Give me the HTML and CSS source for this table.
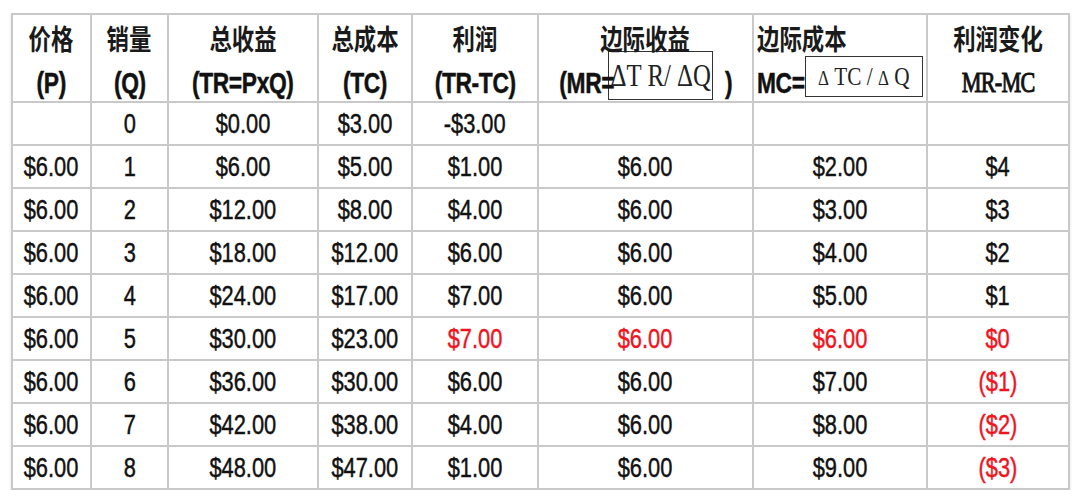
FILE: index.html
```html
<!DOCTYPE html>
<html lang="zh">
<head>
<meta charset="utf-8">
<title>利润表</title>
<link rel="stylesheet" href="styles.css">
</head>
<body>
<table class="grid">
  <colgroup>
    <col class="c1"><col class="c2"><col class="c3"><col class="c4"><col class="c5"><col class="c6"><col class="c7"><col class="c8">
  </colgroup>
  <thead>
    <tr class="head">
      <th><div class="h"><span class="cn">价格</span><span class="lat">(P)</span></div></th>
      <th><div class="h"><span class="cn">销量</span><span class="lat">(Q)</span></div></th>
      <th><div class="h"><span class="cn">总收益</span><span class="lat">(TR=PxQ)</span></div></th>
      <th><div class="h"><span class="cn">总成本</span><span class="lat">(TC)</span></div></th>
      <th><div class="h"><span class="cn">利润</span><span class="lat">(TR-TC)</span></div></th>
      <th><div class="h"><span class="cn">边际收益</span>
        <div class="eqline mr"><span class="lat open">(MR=</span><span class="eq eq-mr"><span class="eqt">ΔT R/ ΔQ</span></span><span class="lat close">)</span></div></div></th>
      <th><div class="h left"><span class="cn">边际成本</span>
        <div class="eqline mc"><span class="lat">MC=</span><span class="eq eq-mc"><span class="eqt small"><span class="d">Δ</span> TC / <span class="d">Δ</span> Q</span></span></div></div></th>
      <th><div class="h"><span class="cn">利润变化</span><span class="serif">MR-MC</span></div></th>
    </tr>
  </thead>
  <tbody>
    <tr><td></td><td><span class="n">0</span></td><td><span class="n">$0.00</span></td><td><span class="n">$3.00</span></td><td><span class="n">-$3.00</span></td><td></td><td></td><td></td></tr>
    <tr><td><span class="n">$6.00</span></td><td><span class="n">1</span></td><td><span class="n">$6.00</span></td><td><span class="n">$5.00</span></td><td><span class="n">$1.00</span></td><td><span class="n">$6.00</span></td><td><span class="n">$2.00</span></td><td><span class="n">$4</span></td></tr>
    <tr><td><span class="n">$6.00</span></td><td><span class="n">2</span></td><td><span class="n">$12.00</span></td><td><span class="n">$8.00</span></td><td><span class="n">$4.00</span></td><td><span class="n">$6.00</span></td><td><span class="n">$3.00</span></td><td><span class="n">$3</span></td></tr>
    <tr><td><span class="n">$6.00</span></td><td><span class="n">3</span></td><td><span class="n">$18.00</span></td><td><span class="n">$12.00</span></td><td><span class="n">$6.00</span></td><td><span class="n">$6.00</span></td><td><span class="n">$4.00</span></td><td><span class="n">$2</span></td></tr>
    <tr><td><span class="n">$6.00</span></td><td><span class="n">4</span></td><td><span class="n">$24.00</span></td><td><span class="n">$17.00</span></td><td><span class="n">$7.00</span></td><td><span class="n">$6.00</span></td><td><span class="n">$5.00</span></td><td><span class="n">$1</span></td></tr>
    <tr><td><span class="n">$6.00</span></td><td><span class="n">5</span></td><td><span class="n">$30.00</span></td><td><span class="n">$23.00</span></td><td class="red"><span class="n">$7.00</span></td><td class="red"><span class="n">$6.00</span></td><td class="red"><span class="n">$6.00</span></td><td class="red"><span class="n">$0</span></td></tr>
    <tr><td><span class="n">$6.00</span></td><td><span class="n">6</span></td><td><span class="n">$36.00</span></td><td><span class="n">$30.00</span></td><td><span class="n">$6.00</span></td><td><span class="n">$6.00</span></td><td><span class="n">$7.00</span></td><td class="red"><span class="n">($1)</span></td></tr>
    <tr><td><span class="n">$6.00</span></td><td><span class="n">7</span></td><td><span class="n">$42.00</span></td><td><span class="n">$38.00</span></td><td><span class="n">$4.00</span></td><td><span class="n">$6.00</span></td><td><span class="n">$8.00</span></td><td class="red"><span class="n">($2)</span></td></tr>
    <tr><td><span class="n">$6.00</span></td><td><span class="n">8</span></td><td><span class="n">$48.00</span></td><td><span class="n">$47.00</span></td><td><span class="n">$1.00</span></td><td><span class="n">$6.00</span></td><td><span class="n">$9.00</span></td><td class="red"><span class="n">($3)</span></td></tr>
  </tbody>
</table>
</body>
</html>
```
FILE: styles.css
```css
html, body {
  margin: 0;
  padding: 0;
  background: #fff;
}
body {
  padding: 13px 0 0 11px;
  font-family: "Liberation Sans", Arial, sans-serif;
  color: #111;
}
.grid {
  border-collapse: collapse;
  table-layout: fixed;
  width: 1057px;
  box-shadow: 0 2px 3px rgba(0,0,0,0.12);
}
.c1 { width: 79px; }
.c2 { width: 77px; }
.c3 { width: 150px; }
.c4 { width: 94px; }
.c5 { width: 126px; }
.c6 { width: 215px; }
.c7 { width: 174px; }
.c8 { width: 142px; }
.grid th, .grid td {
  border: 2px solid #c9c9c9;
  padding: 0;
  text-align: center;
  vertical-align: middle;
  overflow: visible;
}
.head th { height: 86px; }
.grid tbody td { height: 41px; }
.h {
  display: flex;
  flex-direction: column;
  align-items: center;
  padding-top: 2px;
  height: 84px;
  box-sizing: border-box;
}
.h.left { align-items: flex-start; padding-left: 3px; }
.cn {
  display: inline-block;
  font-family: "Noto Sans CJK SC", sans-serif;
  font-weight: 700;
  font-size: 28px;
  line-height: 40px;
  height: 40px;
  transform: scaleX(0.8);
  color: #1a1a1a;
}
.h.left .cn { transform-origin: left center; }
.lat {
  display: inline-block;
  font-family: "Liberation Sans", Arial, sans-serif;
  font-weight: 700;
  font-size: 30px;
  line-height: 42px;
  margin-top: 4px;
  transform: scaleX(0.76);
  letter-spacing: -0.5px;
  -webkit-text-stroke: 0.5px #111;
}
.serif {
  display: inline-block;
  font-family: "Liberation Serif", "Times New Roman", serif;
  font-weight: 400;
  font-size: 30px;
  line-height: 42px;
  margin-top: 3px;
  transform: scaleX(0.74);
  letter-spacing: -1px;
  -webkit-text-stroke: 1px #111;
}
.eqline {
  display: flex;
  align-items: flex-end;
  height: 46px;
}
.eqline.mr { margin-left: -14px; }
.eqline .lat { margin-top: 0; }
.eqline .lat.open { transform-origin: right center; margin-right: -6px; }
.eqline .lat.close { transform-origin: left center; margin-left: 12px; }
.eq {
  display: flex;
  align-items: center;
  justify-content: center;
  border: 1.5px solid #333;
  background: #fff;
  box-sizing: border-box;
}
.eq-mr { width: 105px; height: 49px; margin-bottom: 4px; }
.eq-mc { width: 118px; height: 41px; margin-bottom: 7px; }
.mc .lat { transform-origin: left center; margin-right: -15px; }
.eqt {
  display: inline-block;
  font-family: "Liberation Serif", "Times New Roman", serif;
  font-weight: 400;
  font-size: 31px;
  white-space: pre;
  transform: scaleX(0.8);
  color: #222;
  line-height: 1;
}
.eqt.small { font-size: 25px; transform: scaleX(0.85); }
.eqt .d { font-size: 20px; }
.n {
  display: inline-block;
  font-size: 28px;
  line-height: 40px;
  transform: scaleX(0.78);
  color: #111;
  -webkit-text-stroke: 0.45px #111;
}
.red .n { color: #f0141e; -webkit-text-stroke: 0.45px #f0141e; }
```
